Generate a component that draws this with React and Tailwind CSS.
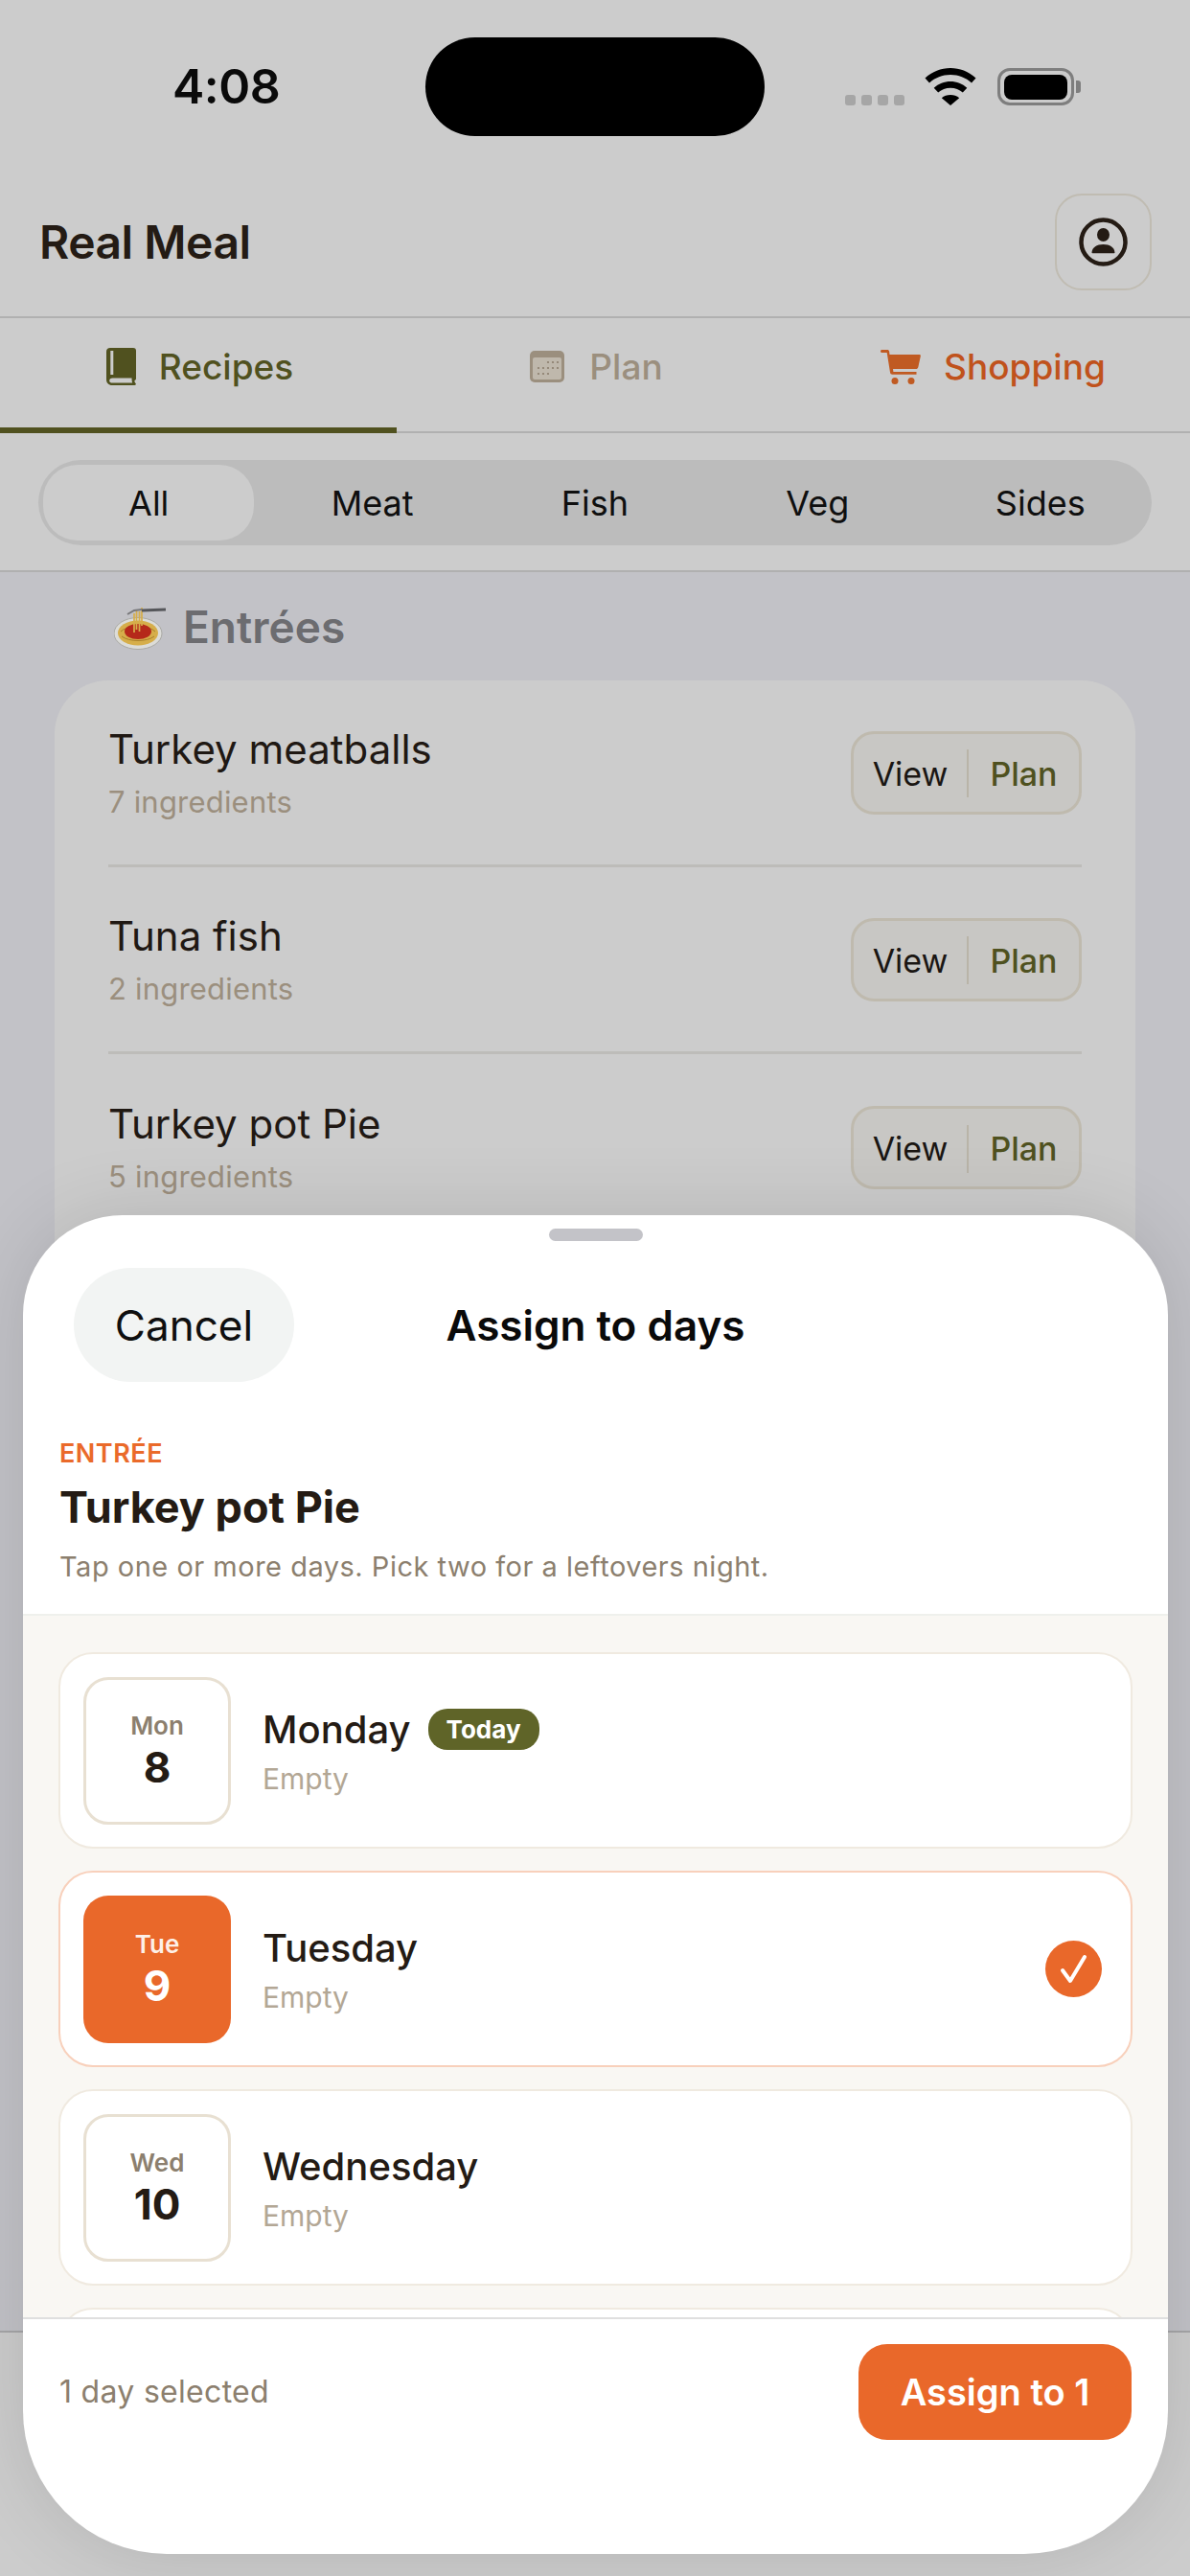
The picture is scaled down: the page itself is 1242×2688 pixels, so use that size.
import React from 'react';

const BookIcon = () => (
  <svg width="31" height="39" viewBox="0 0 31 39">
    <path
      fill="#50511f"
      fillRule="evenodd"
      d="M4 0h24a3 3 0 0 1 3 3v29c0 1-.6 1.700-1.600 2 0 1.300.4 2.200 1.200 3 .6.900.2 2-1 2H6c-3.600 0-6-2.500-6-6V4c0-2.500 1.500-4 4-4zM4.300 3v25h3V3zM6.500 31.500C4.300 31.500 3.200 32.800 3.200 34.200s1.100 2.300 3.300 2.300h20.700c-.5-1.500-.8-3.200-.6-5z"
    />
  </svg>
);

const CalendarIcon = () => (
  <svg width="36" height="33" viewBox="0 0 36 33">
    <rect width="36" height="33" rx="5" fill="#9b8f7e" />
    <rect x="3" y="7" width="30" height="23" rx="2" fill="#bfb8ac" />
    <g fill="#8b7f6e">
      <circle cx="19" cy="12" r="1.100" /><circle cx="24" cy="12" r="1.100" /><circle cx="29" cy="12" r="1.100" />
      <circle cx="9" cy="18" r="1.100" /><circle cx="14" cy="18" r="1.100" /><circle cx="19" cy="18" r="1.100" /><circle cx="24" cy="18" r="1.100" /><circle cx="29" cy="18" r="1.100" />
      <circle cx="9" cy="24" r="1.100" /><circle cx="14" cy="24" r="1.100" /><circle cx="19" cy="24" r="1.100" />
    </g>
  </svg>
);

const CartIcon = () => (
  <svg width="42" height="36" viewBox="0 0 42 36">
    <path
      fill="#c05a22"
      d="M1.500 0h5.500c1.200 0 1.900.6 2.100 1.700L9.500 5h31c1 0 1.500.7 1.300 1.700l-2.400 11c-.3 1.400-1.200 2.300-2.700 2.300H13l.4 3h24.100v2.800H12.500c-1.500 0-2.300-.8-2.500-2.200L6.700 3H1.500C.6 3 0 2.400 0 1.500S.6 0 1.500 0z"
    />
    <circle cx="15" cy="32.500" r="3.500" fill="#c05a22" />
    <circle cx="32" cy="32.500" r="3.500" fill="#c05a22" />
  </svg>
);

const SpaghettiIcon = () => (
  <svg width="54" height="46" viewBox="0 0 54 46">
    <ellipse cx="25" cy="29" rx="25" ry="16.500" fill="#dcdcd8" stroke="#a9a9a5" strokeWidth="1" />
    <ellipse cx="25" cy="28.500" rx="21" ry="13" fill="#d6ae4a" />
    <path d="M7 27c5-6 30-7 36 0M8 32c8 6 26 6 34 0" stroke="#a97f2a" strokeWidth="1" fill="none" />
    <ellipse cx="25" cy="27" rx="14" ry="8" fill="#b5291a" />
    <path d="M21 28V8M23.500 25V4M26.500 27V6M29 21V2" stroke="#d6ae4a" strokeWidth="1.700" fill="none" />
    <path d="M14 9l7-4 8-1" stroke="#77777a" strokeWidth="2" fill="none" />
    <path d="M29 5l25-1" stroke="#55565a" strokeWidth="3" fill="none" />
  </svg>
);

const ProfileIcon = () => (
  <svg width="51" height="51" viewBox="0 0 51 51">
    <circle cx="25.500" cy="25.500" r="23" fill="none" stroke="#241b14" strokeWidth="4.500" />
    <ellipse cx="25.500" cy="18" rx="6.500" ry="7" fill="#241b14" />
    <path fill="#241b14" d="M13.500 36.500c.5-5.500 5-8.500 12-8.500s11.500 3 12 8.500c0 .5-.3.8-.8.8H14.300c-.5 0-.8-.3-.8-.8z" />
  </svg>
);

const WifiIcon = () => (
  <svg width="54" height="39" viewBox="0 0 54 39">
    <path fill="#000" d="M27 0c10 0 19 3.800 26.500 10.500L49 15.500C43 10 35.500 7 27 7S11 10 5 15.500L.5 10.500C8 3.800 17 0 27 0z" />
    <path fill="#000" d="M27 14c6.500 0 12.500 2.400 17.300 6.700L39.800 25.500C36.200 22.400 32 20.800 27 20.800s-9.200 1.600-12.800 4.700L9.700 20.700C14.500 16.400 20.500 14 27 14z" />
    <path fill="#000" d="M27 28c3.500 0 6.700 1.200 9.200 3.200L27 39l-9.200-7.800C20.300 29.200 23.500 28 27 28z" />
  </svg>
);

const recipes = [
  { name: 'Turkey meatballs', count: '7 ingredients' },
  { name: 'Tuna fish', count: '2 ingredients' },
  { name: 'Turkey pot Pie', count: '5 ingredients' },
];

const categories = ['All', 'Meat', 'Fish', 'Veg', 'Sides'];

const days = [
  { short: 'Mon', num: '8', name: 'Monday', today: true },
  { short: 'Tue', num: '9', name: 'Tuesday', selected: true },
  { short: 'Wed', num: '10', name: 'Wednesday' },
];

const RecipeRow = ({ recipe, last }) => (
  <div className={`flex h-[195px] shrink-0 items-center justify-between ${last ? '' : 'border-b-[3px] border-[#bdbcb9]'}`}>
    <div className="flex flex-col">
      <span className="text-[42px] leading-[50px] text-[#1f1813]">{recipe.name}</span>
      <span className="mt-[11px] text-[31px] leading-[38px] tracking-[0.2px] text-[#9b8f7e]">{recipe.count}</span>
    </div>
    <div className="flex h-[87px] w-[241px] items-center rounded-[24px] border-[3px] border-[#bfbaae] bg-[#c8c7c4] pt-[2px] text-[34px]">
      <span className="flex w-[118px] justify-center text-[#1a1613]">View</span>
      <span className="h-[50px] w-[2px] bg-[#b9b4a8]"></span>
      <span className="flex flex-1 justify-center font-medium text-[#4f5120]">Plan</span>
    </div>
  </div>
);

const DayCard = ({ day }) => (
  <div className={`flex h-[205px] shrink-0 items-center rounded-[36px] border-2 bg-white pl-[24px] pr-[30px] ${day.selected ? 'border-[#f8d0bb]' : 'border-[#f0eae0]'}`}>
    <div className={`flex h-[154px] w-[154px] shrink-0 flex-col items-center justify-center rounded-[26px] ${day.selected ? 'bg-[#e9682a]' : 'border-[3px] border-[#e8e0d2] bg-white'}`}>
      <span className={`text-[26px] leading-[32px] font-semibold ${day.selected ? 'text-[#fdf0e8]' : 'text-[#8c7f6e]'}`}>{day.short}</span>
      <span className={`mt-[2px] text-[44px] leading-[50px] font-bold ${day.selected ? 'text-white' : 'text-[#241b14]'}`}>{day.num}</span>
    </div>
    <div className="ml-[33px] flex flex-1 flex-col">
      <div className="flex items-center">
        <span className="text-[40px] leading-[50px] font-medium text-[#241b14]">{day.name}</span>
        {day.today && (
          <span className="ml-[18px] flex h-[43px] w-[116px] items-center justify-center rounded-[20px] bg-[#5f6428] text-[26px] font-bold text-white">Today</span>
        )}
      </div>
      <span className="mt-[8px] text-[30px] leading-[36px] text-[#b3a795]">Empty</span>
    </div>
    {day.selected && (
      <span className="flex h-[59px] w-[59px] items-center justify-center rounded-full bg-[#e9682a]">
        <svg width="30" height="31" viewBox="0 0 30 31" fill="none" stroke="#fff" strokeWidth="4" strokeLinecap="round" strokeLinejoin="round">
          <path d="M3 17l8 11L26 3" />
        </svg>
      </span>
    )}
  </div>
);

const App = () => {
  return (
    <div className="relative flex h-[2688px] w-[1242px] flex-col overflow-hidden bg-[#c2c2c7] font-['Inter','Noto_Sans',sans-serif]">
      {/* Status bar */}
      <div className="flex h-[174px] shrink-0 items-start bg-[#cccccc] pl-[180px]">
        <span className="mt-[64px] w-[112px] text-[50px] leading-[52px] font-semibold tracking-[-0.5px] text-[#0a0a0a]">4:08</span>
        <div className="mt-[39px] ml-[152px] h-[103px] w-[354px] rounded-[52px] bg-black"></div>
        <div className="mt-[99px] ml-[84px] flex gap-[6px]">
          <span className="h-[11px] w-[11px] rounded-[3px] bg-[#a6a6a6]"></span>
          <span className="h-[11px] w-[11px] rounded-[3px] bg-[#a6a6a6]"></span>
          <span className="h-[11px] w-[11px] rounded-[3px] bg-[#a6a6a6]"></span>
          <span className="h-[11px] w-[11px] rounded-[3px] bg-[#a6a6a6]"></span>
        </div>
        <div className="mt-[71px] ml-[21px]">
          <WifiIcon />
        </div>
        <div className="mt-[71px] ml-[22px] flex items-center">
          <div className="flex h-[39px] w-[80px] items-center justify-center rounded-[13px] border-[3px] border-[#7e7e7e]">
            <div className="h-[26px] w-[66px] rounded-[8px] bg-black"></div>
          </div>
          <div className="ml-[2px] h-[13px] w-[5px] rounded-r-[3px] bg-[#7e7e7e]"></div>
        </div>
      </div>

      {/* Header */}
      <div className="flex h-[158px] shrink-0 items-center justify-between border-b-2 border-[#b0b0b0] bg-[#cccccc] pr-[40px] pl-[41px]">
        <span className="pt-[2px] text-[48px] font-semibold tracking-[-0.5px] text-[#241b14]">Real Meal</span>
        <button className="flex h-[101px] w-[101px] items-center justify-center rounded-[28px] border-2 border-[#c0bcb2]">
          <ProfileIcon />
        </button>
      </div>

      {/* Tabs */}
      <div className="grid h-[120px] shrink-0 grid-cols-3 border-b-2 border-[#b0b0b0] bg-[#cccccc] text-[37px] font-medium">
        <div className="relative flex items-center justify-center gap-[24px] pb-[17px] pl-[3px] text-[#50511f]">
          <BookIcon />
          <span>Recipes</span>
          <span className="absolute right-0 -bottom-[2px] left-0 h-[6px] bg-[#50511f]"></span>
        </div>
        <div className="flex items-center justify-center gap-[26px] pb-[17px] pl-[3px] text-[#9b8f7e]">
          <CalendarIcon />
          <span>Plan</span>
        </div>
        <div className="flex items-center justify-center gap-[24px] pb-[17px] pl-[3px] text-[#c0521c]">
          <CartIcon />
          <span>Shopping</span>
        </div>
      </div>

      {/* Category filter */}
      <div className="shrink-0 border-b-2 border-[#b0b0b0] bg-[#cccccc] px-[40px] pt-[28px] pb-[26px]">
        <div className="grid h-[89px] grid-cols-5 rounded-full bg-[#bcbcbc] py-[5px]">
          {categories.map((cat, i) => (
            <div
              key={cat}
              className={`flex items-center justify-center text-[36px] text-[#0f0f0f] ${i === 0 ? 'mr-[7px] ml-[5px] rounded-[36px] bg-[#cccccc]' : ''}`}
            >
              {cat}
            </div>
          ))}
        </div>
      </div>

      {/* Recipe list, dimmed behind the sheet */}
      <div className="flex min-h-0 flex-1 flex-col overflow-hidden px-[57px]">
        <div className="flex h-[113px] shrink-0 items-center pt-[2px] pl-[62px]">
          <SpaghettiIcon />
          <span className="ml-[18px] text-[46px] font-semibold text-[#6c6c70]">Entrées</span>
        </div>
        <div className="flex flex-1 flex-col rounded-t-[56px] bg-[#cccccc] px-[56px]">
          {recipes.map((recipe, i) => (
            <RecipeRow key={recipe.name} recipe={recipe} last={i === recipes.length - 1} />
          ))}
        </div>
      </div>

      {/* Tab bar area under the sheet */}
      <div className="h-[256px] shrink-0 border-t-2 border-[#a6a6a8] bg-[#cccccc]"></div>

      {/* Bottom sheet */}
      <div className="absolute top-[1268px] left-[24px] flex h-[1397px] w-[1195px] flex-col overflow-hidden rounded-t-[104px] rounded-b-[150px] bg-white shadow-[0_0_80px_rgba(0,0,0,0.12)]">
        <div className="mx-auto mt-[14px] h-[13px] w-[98px] shrink-0 rounded-full bg-[#c3c3c8]"></div>

        <div className="mt-[28px] grid shrink-0 grid-cols-[1fr_auto_1fr] items-center px-[53px]">
          <button className="flex h-[119px] w-[230px] items-center justify-center rounded-full bg-[#f2f4f3] text-[44px] text-[#0f0f0f]">
            Cancel
          </button>
          <span className="text-[44px] font-semibold text-[#0a0a0a]">Assign to days</span>
        </div>

        <div className="flex shrink-0 flex-col pt-[58px] pl-[38px]">
          <span className="text-[27px] leading-[34px] font-semibold tracking-[0.5px] text-[#ea6a2a]">ENTRÉE</span>
          <span className="mt-[13px] text-[45px] leading-[52px] font-bold text-[#241b14]">Turkey pot Pie</span>
          <span className="mt-[17px] text-[29px] leading-[38px] tracking-[0.5px] text-[#8c7f6e]">Tap one or more days. Pick two for a leftovers night.</span>
        </div>

        <div className="mt-[30px] flex min-h-0 flex-1 flex-col gap-[23px] overflow-hidden border-t-2 border-[#eff0ec] bg-[#f9f7f3] px-[37px] pt-[38px]">
          {days.map((day) => (
            <DayCard key={day.name} day={day} />
          ))}
          {/* next day's card, only its top edge shows above the footer */}
          <div className="h-[205px] shrink-0 rounded-[36px] border-2 border-[#f0eae0] bg-white"></div>
        </div>

        <div className="flex h-[247px] shrink-0 items-start justify-between border-t-2 border-[#dfdfdf] pt-[26px] pr-[38px] pl-[38px]">
          <span className="flex h-[100px] items-center text-[32px] tracking-[0.3px] text-[#8c7f6e]">1 day selected</span>
          <button className="flex h-[100px] w-[285px] items-center justify-center rounded-[30px] bg-[#e9682a] text-[38px] font-semibold text-white">
            Assign to 1
          </button>
        </div>
      </div>
    </div>
  );
};

export default App;
